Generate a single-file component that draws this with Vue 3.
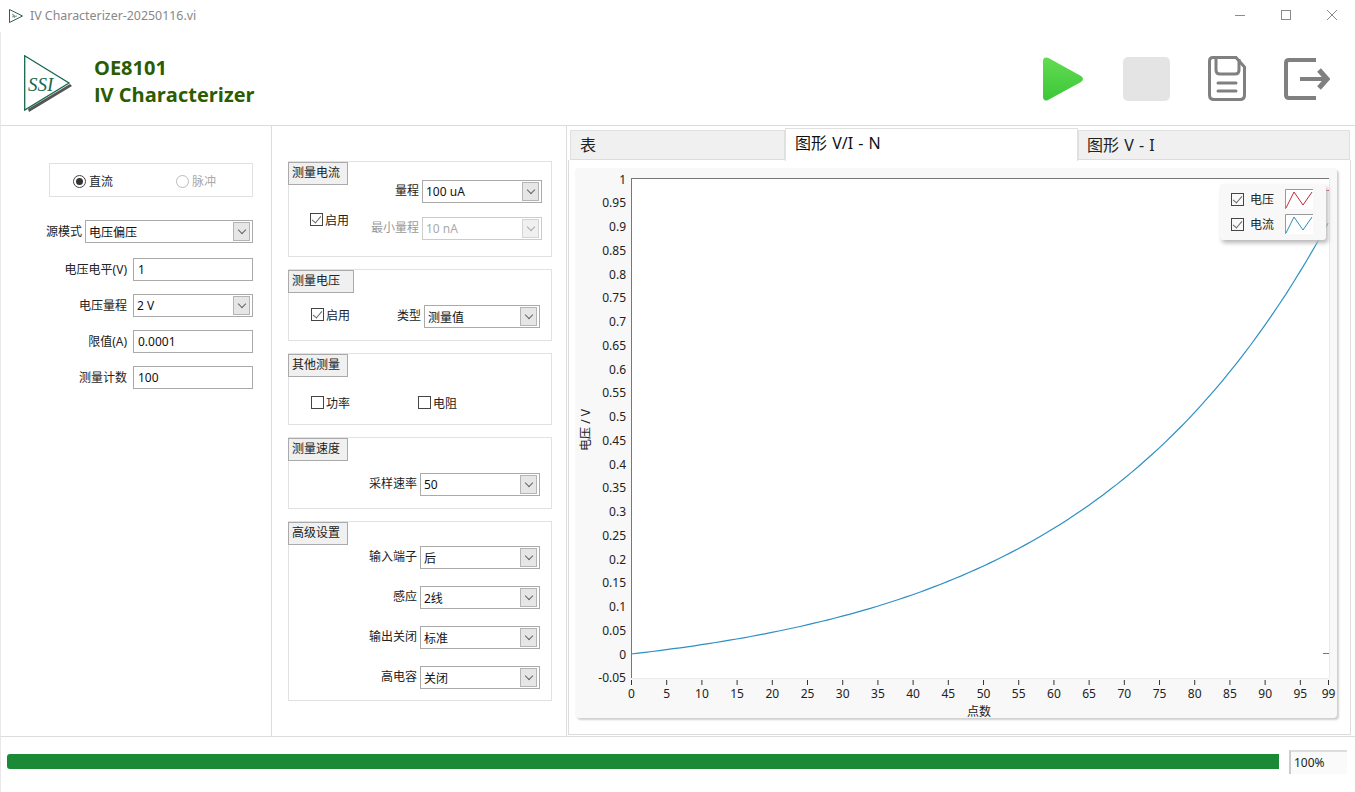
<template>
  <div class="app">
    <div class="titlebar">
      <svg class="title-icon" width="16" height="16" viewBox="0 0 16 16">
        <path d="M1.5 1.5 L14.5 8 L1.5 14.5 Z" fill="#fff" stroke="#2f5f50" stroke-width="1" />
        <path d="M4 6 L7 8 M4 9 L9 8 M5 7 L7 10" stroke="#7a9a90" stroke-width="1" fill="none" />
      </svg>
      <span class="title-text">IV Characterizer-20250116.vi</span>
      <div class="win-btns">
        <svg width="12" height="12" viewBox="0 0 12 12"><path d="M1 6.5 H11" stroke="#8a8a8a" fill="none" /></svg>
        <svg width="12" height="12" viewBox="0 0 12 12"><rect x="1.5" y="1.5" width="9" height="9" stroke="#8a8a8a" fill="none" /></svg>
        <svg width="12" height="12" viewBox="0 0 12 12"><path d="M1 1 L11 11 M11 1 L1 11" stroke="#8a8a8a" fill="none" /></svg>
      </div>
    </div>

    <header class="header">
      <svg class="logo" width="50" height="58" viewBox="0 0 50 58">
        <path d="M4 54 L46 29 L48 31 L5 57 Z" fill="#555" />
        <path d="M0.7 0.7 L45 28 L0.7 55 Z" fill="#fff" stroke="#17694a" stroke-width="1.3" />
        <text x="4" y="36" class="logo-text">SSI</text>
      </svg>
      <div class="brand">
        <div>OE8101</div>
        <div>IV Characterizer</div>
      </div>
      <div class="tools">
        <svg class="play" width="40" height="44" viewBox="0 0 40 44">
          <defs>
            <linearGradient id="playFill" x1="0" y1="0" x2="0" y2="1">
              <stop offset="0" stop-color="#62dc52" />
              <stop offset="1" stop-color="#3cc738" />
            </linearGradient>
          </defs>
          <path d="M3 0.5 C1 0.5 0 2 0 4 V40 C0 43 2.5 44.5 5 43 L38 25 C40.6 23.4 40.6 20.6 38 19 L6 1.2 C5 0.7 4 0.5 3 0.5 Z" fill="url(#playFill)" />
        </svg>
        <div class="stop"></div>
        <svg width="38" height="45" viewBox="0 0 38 45" fill="none" stroke="#808080" stroke-width="3">
          <path d="M5 1.5 H28 L36.5 11 V39 Q36.5 43.5 32 43.5 H6 Q1.5 43.5 1.5 39 V5 Q1.5 1.5 5 1.5 Z" />
          <path d="M8 2 V14 Q8 18 12 18 H27 Q31 18 31 14 V3" />
          <path d="M10 27 H28 M10 35 H28" stroke-linecap="round" />
        </svg>
        <svg width="46" height="42" viewBox="0 0 46 42" fill="none" stroke="#808080" stroke-width="4">
          <path d="M32 2 H5 Q2 2 2 5 V37 Q2 40 5 40 H32" />
          <path d="M16 21 H40" />
          <path d="M35 12 L43 21 L35 30" stroke-width="5" />
        </svg>
      </div>
    </header>

    <main class="main">
      <section class="left">
        <div class="mode-box">
          <label class="radio-item"><i class="radio on"></i>直流</label>
          <label class="radio-item off"><i class="radio"></i>脉冲</label>
        </div>
        <div class="row first">
          <span class="lbl">源模式</span>
          <div class="sel wide"><span>电压偏压</span><i class="arrow"></i></div>
        </div>
        <div class="row">
          <span class="lbl">电压电平(V)</span>
          <div class="inp">1</div>
        </div>
        <div class="row">
          <span class="lbl">电压量程</span>
          <div class="sel narrow"><span>2 V</span><i class="arrow"></i></div>
        </div>
        <div class="row">
          <span class="lbl">限值(A)</span>
          <div class="inp">0.0001</div>
        </div>
        <div class="row">
          <span class="lbl">测量计数</span>
          <div class="inp">100</div>
        </div>
      </section>

      <section class="middle">
        <div class="group g1">
          <div class="g-title">测量电流</div>
          <label class="check-item en1"><i class="check on"></i>启用</label>
          <div class="g1-fields">
            <div class="row">
              <span class="lbl">量程</span>
              <div class="sel s120"><span>100 uA</span><i class="arrow"></i></div>
            </div>
            <div class="row dis">
              <span class="lbl">最小量程</span>
              <div class="sel s120"><span>10 nA</span><i class="arrow"></i></div>
            </div>
          </div>
        </div>

        <div class="group g2">
          <div class="g-title long">测量电压</div>
          <label class="check-item"><i class="check on"></i>启用</label>
          <div class="row">
            <span class="lbl">类型</span>
            <div class="sel s116"><span>测量值</span><i class="arrow"></i></div>
          </div>
        </div>

        <div class="group g3">
          <div class="g-title">其他测量</div>
          <label class="check-item"><i class="check"></i>功率</label>
          <label class="check-item"><i class="check"></i>电阻</label>
        </div>

        <div class="group g4">
          <div class="g-title">测量速度</div>
          <div class="row">
            <span class="lbl">采样速率</span>
            <div class="sel s120"><span>50</span><i class="arrow"></i></div>
          </div>
        </div>

        <div class="group g5">
          <div class="g-title">高级设置</div>
          <div v-for="item in advanced" :key="item.label" class="row">
            <span class="lbl">{{ item.label }}</span>
            <div class="sel s120"><span>{{ item.value }}</span><i class="arrow"></i></div>
          </div>
        </div>
      </section>

      <section class="right">
        <div class="tabs">
          <div class="tab t1">表</div>
          <div class="tab t2 active">图形 V/I - N</div>
          <div class="tab t3">图形 V - I</div>
        </div>
        <div class="tab-body">
          <div class="chart">
            <svg width="762" height="556" viewBox="0 0 762 556">
              <rect x="56" y="10" width="698" height="500" fill="#fff" />
              <path d="M56 510.5 H754 M754.5 10 V510" stroke="#eaeaea" fill="none" />
              <path d="M56 10.5 H754 M56.5 10 V510" stroke="#777" fill="none" />
              <g v-for="t in yTicks" :key="t.label">
                <text x="51" :y="t.y + 4.5" text-anchor="end" class="tick">{{ t.label }}</text>
              </g>
              <g v-for="t in xTicks" :key="t.label">
                <path :d="`M${t.x + 0.5} 512 V517`" stroke="#333" />
                <text :x="t.x + 0.5" y="530" text-anchor="middle" class="tick">{{ t.label }}</text>
              </g>
              <text x="404" y="548" text-anchor="middle" class="tick">点数</text>
              <text transform="translate(15 262) rotate(-90)" text-anchor="middle" class="tick">电压 / V</text>
              <path :d="curve" fill="none" stroke="#2e8fc4" stroke-width="1.2" />
              <path d="M751 22.5 H754" stroke="#c8323c" />
              <path d="M748 485.5 H754" stroke="#2a8fb8" />
            </svg>
            <div class="legend">
              <div v-for="l in legend" :key="l.name" class="legend-row">
                <i class="check on"></i>
                <span>{{ l.name }}</span>
                <svg width="28" height="20" viewBox="0 0 28 20">
                  <rect width="28" height="20" fill="#fff" />
                  <path d="M0.5 20 V0.5 H28" fill="none" stroke="#999" />
                  <path d="M1 19 L9 3 L18 16 L27 3" fill="none" :stroke="l.color" />
                </svg>
              </div>
            </div>
          </div>
        </div>
      </section>
    </main>

    <footer class="footer">
      <div class="progress"><div class="bar" :style="{ width: progress + '%' }"></div></div>
      <div class="percent">{{ progress }}%</div>
    </footer>
  </div>
</template>

<script setup>
const progress = 100

const advanced = [
  { label: '输入端子', value: '后' },
  { label: '感应', value: '2线' },
  { label: '输出关闭', value: '标准' },
  { label: '高电容', value: '关闭' }
]

const legend = [
  { name: '电压', color: '#c02a36' },
  { name: '电流', color: '#2a8fb8' }
]

// plot area inside the chart svg
const xAt = (n) => 56 + (n * 697) / 99
const yAt = (v) => 486 - v * 475

const yTicks = []
for (let i = 20; i >= -1; i--) {
  const v = i * 0.05
  yTicks.push({ label: String(+v.toFixed(2)), y: yAt(v) })
}

const xTicks = []
for (let n = 0; n <= 95; n += 5) {
  xTicks.push({ label: String(n), x: xAt(n) })
}
xTicks.push({ label: '99', x: xAt(99) })

let curve = ''
for (let n = 0; n <= 99; n++) {
  const v = 0.0605 * (Math.exp(0.028 * n) - 1)
  curve += (n ? 'L' : 'M') + xAt(n).toFixed(1) + ' ' + yAt(v).toFixed(1) + ' '
}
</script>

<style>
html, body {
  margin: 0;
  background: #fff;
  overflow: hidden;
}
</style>

<style scoped>
.app {
  width: 1355px;
  height: 792px;
  display: flex;
  flex-direction: column;
  background: #fff;
  color: #222;
  font-family: "Noto Sans", "Noto Sans CJK SC", sans-serif;
  font-size: 12px;
  overflow: hidden;
}

.titlebar {
  height: 32px;
  display: flex;
  align-items: center;
  padding-left: 8px;
}
.title-icon {
  margin-right: 6px;
}
.title-text {
  color: #888;
  font-size: 12.4px;
  margin-top: -1px;
}
.win-btns {
  margin-left: auto;
  margin-right: 17px;
  margin-top: -2px;
  display: flex;
  gap: 34px;
}

.header {
  height: 93px;
  display: flex;
  align-items: center;
  border-bottom: 1px solid #dcdcdc;
  border-left: 1px solid #e8e8e8;
  padding-left: 23px;
}
.logo {
  margin-top: 11px;
}
.logo-text {
  font-family: "Liberation Serif", serif;
  font-style: italic;
  font-size: 19px;
  fill: #17694a;
}
.brand {
  margin-left: 20px;
  margin-top: 4px;
  color: #2b5c00;
  font-family: "Open Sans", sans-serif;
  font-weight: 700;
  font-size: 20px;
  line-height: 27px;
}
.tools {
  margin-left: auto;
  margin-right: 25px;
  display: flex;
  align-items: center;
  gap: 38px;
}
.play {
  margin-right: 2px;
}
.stop {
  width: 47px;
  height: 44px;
  background: #e4e4e4;
  border-radius: 5px;
}

.main {
  height: 610px;
  display: flex;
  border-bottom: 1px solid #dcdcdc;
  border-left: 1px solid #e8e8e8;
}

.left {
  width: 270px;
  box-sizing: content-box;
  border-right: 1px solid #dcdcdc;
  padding-top: 37px;
  display: flex;
  flex-direction: column;
  align-items: flex-end;
}
.left .row {
  margin-right: 18px;
  margin-top: 13px;
}
.left .row.first {
  margin-top: 23px;
  margin-bottom: 2px;
}
.left .lbl {
  margin-right: 6px;
  margin-bottom: 2px;
}
.left .row.first .lbl {
  margin-right: 3px;
}
.mode-box {
  width: 204px;
  height: 34px;
  box-sizing: border-box;
  border: 1px solid #e0e0e0;
  margin-right: 18px;
  padding: 2px 0 0 23px;
  display: flex;
  align-items: center;
}
.radio-item {
  flex: none;
  display: flex;
  align-items: center;
  gap: 3px;
}
.radio-item:first-child {
  width: 103px;
}
.radio-item.off {
  color: #aaa;
}
.radio {
  width: 13px;
  height: 13px;
  box-sizing: border-box;
  border: 1px solid #bbb;
  border-radius: 50%;
  display: block;
  position: relative;
}
.radio.on {
  border-color: #444;
}
.radio.on::after {
  content: "";
  position: absolute;
  left: 2px;
  top: 2px;
  width: 7px;
  height: 7px;
  border-radius: 50%;
  background: #333;
}

.row {
  display: flex;
  align-items: center;
  justify-content: flex-end;
  height: 23px;
}
.lbl {
  margin-right: 3px;
  white-space: nowrap;
}
.inp {
  width: 120px;
  height: 23px;
  box-sizing: border-box;
  border: 1px solid #aaa;
  padding-left: 4px;
  line-height: 22px;
  color: #111;
}
.sel {
  height: 23px;
  box-sizing: border-box;
  border: 1px solid #aaa;
  padding-left: 3px;
  padding-right: 2px;
  display: flex;
  align-items: center;
  justify-content: space-between;
  color: #111;
}
.sel.wide { width: 168px; }
.sel.narrow { width: 120px; }
.sel.s120 { width: 120px; }
.sel.s116 { width: 116px; }
.arrow {
  width: 17px;
  height: 19px;
  box-sizing: border-box;
  border: 1px solid #b4b4b4;
  background: #e6e6e6;
  display: flex;
  align-items: center;
  justify-content: center;
}
.arrow::after {
  content: "";
  width: 5px;
  height: 5px;
  border-right: 1px solid #666;
  border-bottom: 1px solid #666;
  transform: translateY(-2px) rotate(45deg);
}
.dis {
  color: #999;
}
.dis .sel {
  border-color: #ccc;
  color: #aaa;
}
.dis .arrow {
  border-color: #d4d4d4;
  background: #f0f0f0;
}
.dis .arrow::after {
  border-color: #aaa;
}

.middle {
  width: 295px;
  border-right: 1px solid #dcdcdc;
  padding: 35px 0 0 16px;
  box-sizing: border-box;
  display: flex;
  flex-direction: column;
  gap: 12px;
}
.middle .lbl {
  margin-bottom: 4px;
}
.group {
  width: 264px;
  box-sizing: border-box;
  border: 1px solid #e2e2e2;
  position: relative;
  display: flex;
}
.g-title {
  position: absolute;
  left: -1px;
  top: 0;
  width: 60px;
  height: 23px;
  box-sizing: border-box;
  border: 1px solid #aaa;
  background: #f0f0f0;
  padding-left: 3px;
  line-height: 20px;
}
.g-title.long {
  width: 66px;
}
.check-item {
  display: flex;
  align-items: center;
  gap: 2px;
  height: 23px;
}
.check {
  width: 13px;
  height: 13px;
  box-sizing: border-box;
  border: 1px solid #444;
  display: block;
  position: relative;
}
.check.on::after {
  content: "";
  position: absolute;
  left: 3px;
  top: 0;
  width: 4px;
  height: 8px;
  border-right: 1px solid #666;
  border-bottom: 1px solid #666;
  transform: rotate(40deg);
}

.g1 {
  height: 96px;
  padding: 18px 9px 0 21px;
  justify-content: space-between;
}
.g1 .en1 {
  margin-top: 28px;
}
.g1-fields {
  display: flex;
  flex-direction: column;
  gap: 14px;
}
.g2 {
  height: 72px;
  padding: 35px 11px 0 22px;
  justify-content: space-between;
}
.g2 .check-item {
  margin-top: -2px;
}
.g3 {
  height: 72px;
  padding: 37px 0 0 22px;
  gap: 68px;
}
.g4 {
  height: 72px;
  padding: 35px 11px 0 0;
  justify-content: flex-end;
}
.g5 {
  height: 180px;
  padding: 24px 11px 0 0;
  flex-direction: column;
  gap: 17px;
}

.right {
  flex: 1;
  padding-left: 1px;
  display: flex;
  flex-direction: column;
}
.tabs {
  height: 34px;
  display: flex;
  align-items: flex-end;
  padding-left: 2px;
  font-size: 16px;
  word-spacing: 1px;
}
.tab {
  height: 30px;
  box-sizing: border-box;
  background: #f0f0f0;
  border: 1px solid #e0e0e0;
  border-bottom: 1px solid #dcdcdc;
  padding-left: 8px;
  line-height: 29px;
  color: #222;
}
.t1 { width: 215px; padding-left: 9px; }
.t2 { width: 293px; padding-left: 9px; }
.t3 { width: 272px; }
.tab.active {
  height: 33px;
  background: #fff;
  border-bottom: none;
  margin-bottom: -1px;
  position: relative;
  z-index: 1;
  color: #111;
}
.tab-body {
  width: 783px;
  height: 575px;
  box-sizing: border-box;
  border: 1px solid #dcdcdc;
  border-top: none;
  margin-top: 0;
  padding: 8px 0 0 6px;
}
.chart {
  width: 762px;
  height: 550px;
  background: #f8f8f8;
  border-radius: 4px;
  box-shadow: 2px 2px 2px #d0d0d0;
  position: relative;
}
.chart > svg {
  display: block;
  overflow: visible;
}
.tick {
  font-family: "Noto Sans", "Noto Sans CJK SC", sans-serif;
  font-size: 12px;
  fill: #222;
}
.legend {
  position: absolute;
  left: 645px;
  top: 16px;
  width: 106px;
  height: 56px;
  box-sizing: border-box;
  background: #f8f8f8;
  border-radius: 3px;
  box-shadow: 2px 3px 4px #b8b8b8;
  padding: 5px 0 0 11px;
  display: flex;
  flex-direction: column;
  gap: 5px;
}
.legend-row {
  display: flex;
  align-items: center;
  gap: 6px;
  height: 20px;
}
.legend-row span {
  width: 29px;
}

.footer {
  flex: 1;
  display: flex;
  align-items: flex-start;
  border-left: 1px solid #e8e8e8;
  padding-left: 6px;
}
.progress {
  width: 1272px;
  height: 15px;
  margin-top: 17px;
}
.bar {
  height: 100%;
  background: #1b8a36;
  border-radius: 3px 0 0 3px;
}
.percent {
  width: 58px;
  height: 24px;
  box-sizing: border-box;
  margin: 13px 0 0 10px;
  border-left: 2px solid #ccc;
  border-top: 2px solid #ddd;
  padding-left: 3px;
  line-height: 21px;
  background: #fafafa;
}
</style>
